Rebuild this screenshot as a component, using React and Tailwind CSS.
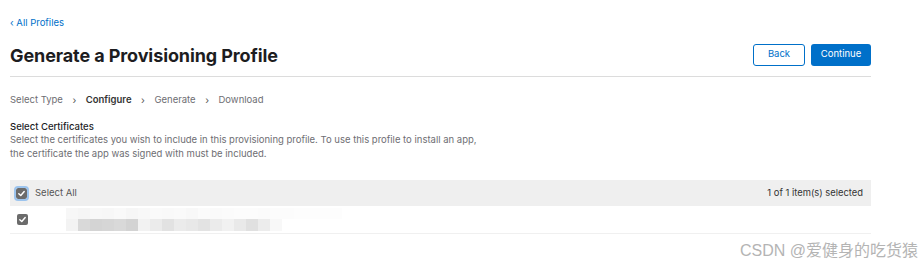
import React from 'react';

const Check = ({ focus }) => (
  <span
    className={`flex items-center justify-center w-[11px] h-[11px] rounded-[2px] bg-[#6b6b6b] ${
      focus ? 'outline outline-2 outline-[#9cc4ee]' : ''
    }`}
  >
    <svg width="9" height="9" viewBox="0 0 10 10" fill="none">
      <path d="M2 5.2 L4.2 7.3 L8 2.8" stroke="white" strokeWidth="1.6" strokeLinecap="round" strokeLinejoin="round" />
    </svg>
  </span>
);

const blurTop = ['#f7f7f7', '#f5f5f5', '#f8f8f8', '#f7f7f7', '#f9f9f9', '#f6f6f6', '#f8f8f8', '#fafafa', '#f9f9f9', '#fafafa', '#f8f8f8', '#fbfbfb', '#fafafa', '#fbfbfb', '#fcfcfc', '#fcfcfc', '#fbfbfb', '#fcfcfc', '#fcfcfc', '#fdfdfd', '#fdfdfd', '#fdfdfd', '#fdfdfd'];
const blurBottom = ['#f3f3f3', '#d9d9d9', '#d4d4d4', '#d6d6d6', '#d9d9d9', '#d3d3d3', '#f2f2f2', '#ebebeb', '#e2e2e2', '#ebebeb', '#e8e8e8', '#e3e3e3', '#ebebeb', '#f1f1f1', '#e9e9e9', '#e0e0e0', '#ececec', '#f8f8f8'];

export default function App() {
  return (
    <div className="relative w-[923px] h-[264px] bg-white overflow-hidden font-['Inter','Liberation_Sans',sans-serif]">
      <div className="w-[861px] ml-[10px] pt-[17px]">
        {/* Back link */}
        <a className="block text-[9.5px] leading-[12px] text-[#0070c9]">‹ All Profiles</a>

        {/* Header */}
        <div className="flex items-center justify-between mt-[8px] pb-[9px] border-b border-[#dcdcdc]">
          <h1 className="text-[18px] leading-[22px] font-bold text-[#1d1d1f] tracking-[-0.1px] mt-[8px]">
            Generate a Provisioning Profile
          </h1>
          <div className="flex gap-[6px] mt-[5px]">
            <button className="w-[52px] h-[22px] rounded-[3px] border border-[#0070c9] text-[9.5px] text-[#0070c9] bg-white">
              Back
            </button>
            <button className="w-[60px] h-[22px] rounded-[3px] bg-[#0070c9] text-[9.5px] text-white">
              Continue
            </button>
          </div>
        </div>

        {/* Steps */}
        <div className="flex items-center gap-[9.5px] mt-[17px] text-[9.5px] leading-[12px] text-[#6e6e73]">
          <span>Select Type</span>
          <span className="text-[#555] text-[10px]">›</span>
          <span className="font-semibold text-[#333]">Configure</span>
          <span className="text-[#555] text-[10px]">›</span>
          <span>Generate</span>
          <span className="text-[#555] text-[10px]">›</span>
          <span>Download</span>
        </div>

        {/* Certificates */}
        <div className="mt-[15px]">
          <h2 className="text-[9.5px] leading-[12px] font-medium text-[#1d1d1f]">Select Certificates</h2>
          <p className="text-[9.5px] leading-[14px] text-[#6e6e73]">
            Select the certificates you wish to include in this provisioning profile. To use this profile to install an app,
            <br />
            the certificate the app was signed with must be included.
          </p>
        </div>

        {/* Table */}
        <div className="mt-[19px]">
          <div className="flex items-center justify-between h-[26px] bg-[#efefef] pl-[6px] pr-[8px]">
            <div className="flex items-center gap-[8px]">
              <Check focus />
              <span className="text-[9.5px] text-[#555]">Select All</span>
            </div>
            <span className="text-[9.4px] text-[#333]">1 of 1 item(s) selected</span>
          </div>
          <div className="flex items-center h-[28px] border-b border-[#f0f0f0] pl-[7px]">
            <Check />
            <div className="ml-[38px] flex flex-col">
              <div className="flex h-[11px]">
                {blurTop.map((c, i) => (
                  <span key={i} className="w-[12px] h-full" style={{ backgroundColor: c }} />
                ))}
              </div>
              <div className="flex h-[12px]">
                {blurBottom.map((c, i) => (
                  <span key={i} className="w-[12px] h-full" style={{ backgroundColor: c }} />
                ))}
              </div>
            </div>
          </div>
        </div>
      </div>

      {/* Watermark */}
      <div className="absolute right-[5px] top-[239px] text-[16px] text-[#b4b4b4] font-['Liberation_Sans','Noto_Sans_CJK_SC',sans-serif]">
        CSDN @爱健身的吃货猿
      </div>
    </div>
  );
}
